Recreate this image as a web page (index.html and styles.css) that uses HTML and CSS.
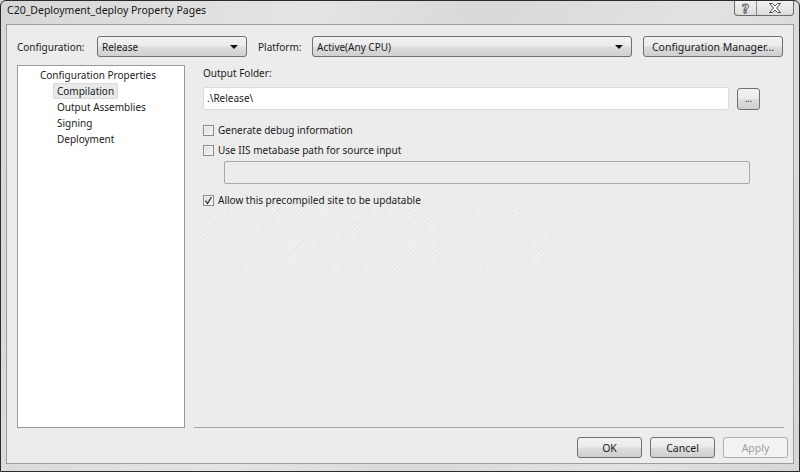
FILE: index.html
```html
<!DOCTYPE html>
<html lang="en">
<head>
    <meta charset="UTF-8">
    <title>C20_Deployment_deploy Property Pages</title>
    <link rel="stylesheet" href="styles.css">
</head>
<body>
    <div class="window">
        <div class="titlebar">
            <span class="title">C20_Deployment_deploy Property Pages</span>
            <div class="caption-buttons">
                <span class="cap-btn help">?</span>
                <span class="cap-btn close">
                    <svg width="14" height="10" viewBox="0 0 14 10">
                        <path d="M1.5 0.5 L4.5 0.5 L7 3 L9.5 0.5 L12.5 0.5 L8.5 5 L12.5 9.5 L9.5 9.5 L7 7 L4.5 9.5 L1.5 9.5 L5.5 5 Z" fill="#fff" stroke="#4a4a4a" stroke-width="1"/>
                    </svg>
                </span>
            </div>
        </div>

        <div class="frame">
            <div class="toolbar">
                <label class="tb-label config-label">Configuration:</label>
                <div class="dropdown config-drop">
                    <span>Release</span>
                    <span class="arrow"></span>
                </div>
                <label class="tb-label platform-label">Platform:</label>
                <div class="dropdown platform-drop">
                    <span>Active(Any CPU)</span>
                    <span class="arrow"></span>
                </div>
                <button class="btn manager-btn">Configuration Manager...</button>
            </div>

            <div class="main">
                <div class="tree">
                    <div class="tree-node root">Configuration Properties</div>
                    <div class="tree-children">
                        <div class="tree-node"><span class="selected">Compilation</span></div>
                        <div class="tree-node"><span>Output Assemblies</span></div>
                        <div class="tree-node"><span>Signing</span></div>
                        <div class="tree-node"><span>Deployment</span></div>
                    </div>
                </div>

                <div class="page">
                    <div class="field-label">Output Folder:</div>
                    <div class="folder-row">
                        <div class="textbox">.\Release\</div>
                        <button class="btn browse-btn">...</button>
                    </div>

                    <div class="check-row first">
                        <span class="checkbox"></span>
                        <span>Generate debug information</span>
                    </div>
                    <div class="check-row">
                        <span class="checkbox"></span>
                        <span>Use IIS metabase path for source input</span>
                    </div>
                    <div class="textbox disabled"></div>
                    <div class="check-row last">
                        <span class="checkbox checked">
                            <svg width="9" height="9" viewBox="0 0 9 9">
                                <path d="M1.5 4.5 L3.5 7.5 L7.5 1" fill="none" stroke="#333" stroke-width="1.3"/>
                            </svg>
                        </span>
                        <span>Allow this precompiled site to be updatable</span>
                    </div>

                    <div class="watermark">O’REILLY<sup>®</sup></div>
                </div>
            </div>

            <div class="footer">
                <button class="btn dlg-btn">OK</button>
                <button class="btn dlg-btn">Cancel</button>
                <button class="btn dlg-btn" disabled>Apply</button>
            </div>
        </div>
    </div>
</body>
</html>
```

FILE: styles.css
```css
* {
    box-sizing: border-box;
}

body {
    margin: 0;
    width: 800px;
    height: 472px;
    overflow: hidden;
    background-color: #d4d4d4;
    font-family: "Noto Sans", "Open Sans", sans-serif;
    font-size: 10px;
    color: #1b1b1b;
}

.window {
    height: 472px;
    border: 1px solid #2b2b2b;
    border-radius: 6px 6px 0 0;
    background: linear-gradient(100deg, #d7d7d7 0%, #e4e4e4 35%, #d9d9d9 55%, #e2e2e2 80%, #d6d6d6 100%);
    display: flex;
    flex-direction: column;
}

/* title bar */
.titlebar {
    height: 23px;
    display: flex;
    align-items: flex-start;
    flex-shrink: 0;
}

.title {
    margin: 2px 0 0 6px;
    font-size: 10.5px;
    color: #151515;
}

.caption-buttons {
    margin-left: auto;
    margin-right: 5px;
    display: flex;
    height: 15px;
    border: 1px solid #6a6a6a;
    border-top: none;
    border-radius: 0 0 4px 4px;
    background: linear-gradient(#f2f2f2, #dcdcdc);
    overflow: hidden;
}

.cap-btn {
    display: flex;
    align-items: center;
    justify-content: center;
    height: 100%;
}

.cap-btn.help {
    width: 22px;
    border-right: 1px solid #8a8a8a;
    font-family: "DejaVu Sans", sans-serif;
    font-weight: bold;
    font-size: 13px;
    color: #fff;
    -webkit-text-stroke: 0.8px #444;
}

.cap-btn.close {
    width: 36px;
}

/* inner frame */
.frame {
    flex: 1;
    margin: 0 5px 7px 5px;
    border: 1px solid #9c9c9c;
    background-color: #ececec;
    padding: 11px 9px 0 10px;
    display: flex;
    flex-direction: column;
}

.toolbar {
    display: flex;
    align-items: center;
    height: 21px;
}

.tb-label {
    flex-shrink: 0;
}

.config-label {
    width: 80px;
}

.platform-label {
    width: 54px;
    margin-left: 11px;
}

.dropdown {
    height: 21px;
    display: flex;
    align-items: center;
    padding: 0 8px 0 4px;
    border: 1px solid #707070;
    border-radius: 3px;
    background: linear-gradient(#f3f3f3 0%, #ebebeb 48%, #dddddd 52%, #d0d0d0 100%);
}

.dropdown .arrow {
    margin-left: auto;
    width: 0;
    height: 0;
    border-left: 4px solid transparent;
    border-right: 4px solid transparent;
    border-top: 4px solid #111;
}

.config-drop {
    width: 150px;
}

.platform-drop {
    width: 320px;
}

.btn {
    font-family: inherit;
    font-size: 10px;
    color: #1b1b1b;
    border: 1px solid #707070;
    border-radius: 3px;
    background: linear-gradient(#f2f2f2 0%, #ebebeb 48%, #dddddd 52%, #cfcfcf 100%);
    padding: 0;
}

.manager-btn {
    width: 140px;
    height: 21px;
    margin-left: 11px;
    font-size: 10.5px;
}

/* tree and page */
.main {
    flex: 1;
    display: flex;
    margin-top: 8px;
}

.tree {
    width: 168px;
    background-color: #fff;
    border: 1px solid #9a9a9a;
    padding: 1px 0 0 22px;
}

.tree-node {
    height: 16px;
    line-height: 16px;
    white-space: nowrap;
}

.tree-children {
    padding-left: 13px;
}

.tree-children span {
    padding: 0 3px;
    border: 1px solid transparent;
    border-radius: 2px;
}

.tree-children .selected {
    background-color: #e9e9e9;
    border-color: #dadada;
}

.page {
    position: relative;
    flex: 1;
    margin-left: 9px;
    padding: 0 24px 0 9px;
    border-bottom: 1px solid #a3a3a3;
}

.field-label {
    height: 16px;
    line-height: 16px;
}

.folder-row {
    display: flex;
    align-items: center;
    margin-top: 6px;
}

.textbox {
    height: 23px;
    line-height: 21px;
    padding: 0 3px;
    background-color: #fff;
    border: 1px solid #dedede;
    border-radius: 2px;
}

.folder-row .textbox {
    width: 526px;
}

.browse-btn {
    width: 23px;
    height: 22px;
    margin-left: 8px;
    font-size: 9px;
    line-height: 12px;
}

.textbox.disabled {
    width: 526px;
    margin: 3px 0 0 21px;
    background-color: #ececec;
    border-color: #a9a9a9;
}

.check-row {
    display: flex;
    align-items: center;
    gap: 4px;
    height: 16px;
    margin-top: 4px;
}

.check-row.first {
    margin-top: 12px;
}

.check-row.last {
    margin-top: 8px;
}

.checkbox {
    width: 11px;
    height: 11px;
    border: 1px solid #8c8c8c;
    background: linear-gradient(135deg, #dcdcdc, #f7f7f7);
    box-shadow: inset 0 0 0 1px #f2f2f2;
    display: flex;
    align-items: center;
    justify-content: center;
}

.checkbox svg {
    display: block;
}

.watermark {
    position: absolute;
    left: 5px;
    top: 143px;
    font-family: "Liberation Sans", sans-serif;
    font-size: 94px;
    line-height: 66px;
    letter-spacing: -6px;
    white-space: nowrap;
    background: repeating-linear-gradient(135deg, #e6e6e6 0 1px, #f0f0f0 1px 3px);
    -webkit-background-clip: text;
    background-clip: text;
    color: transparent;
    pointer-events: none;
}

.watermark sup {
    font-size: 29px;
    line-height: 0;
    letter-spacing: 0;
    vertical-align: 48px;
    margin-left: 12px;
}

/* dialog buttons */
.footer {
    height: 35px;
    display: flex;
    justify-content: flex-end;
    align-items: flex-start;
    gap: 8px;
    padding-top: 9px;
    margin-right: -4px;
}

.dlg-btn {
    width: 65px;
    height: 21px;
    font-size: 10.5px;
}

.dlg-btn[disabled] {
    color: #9d9d9d;
    border-color: #adadad;
    background: #f3f3f3;
}
```
